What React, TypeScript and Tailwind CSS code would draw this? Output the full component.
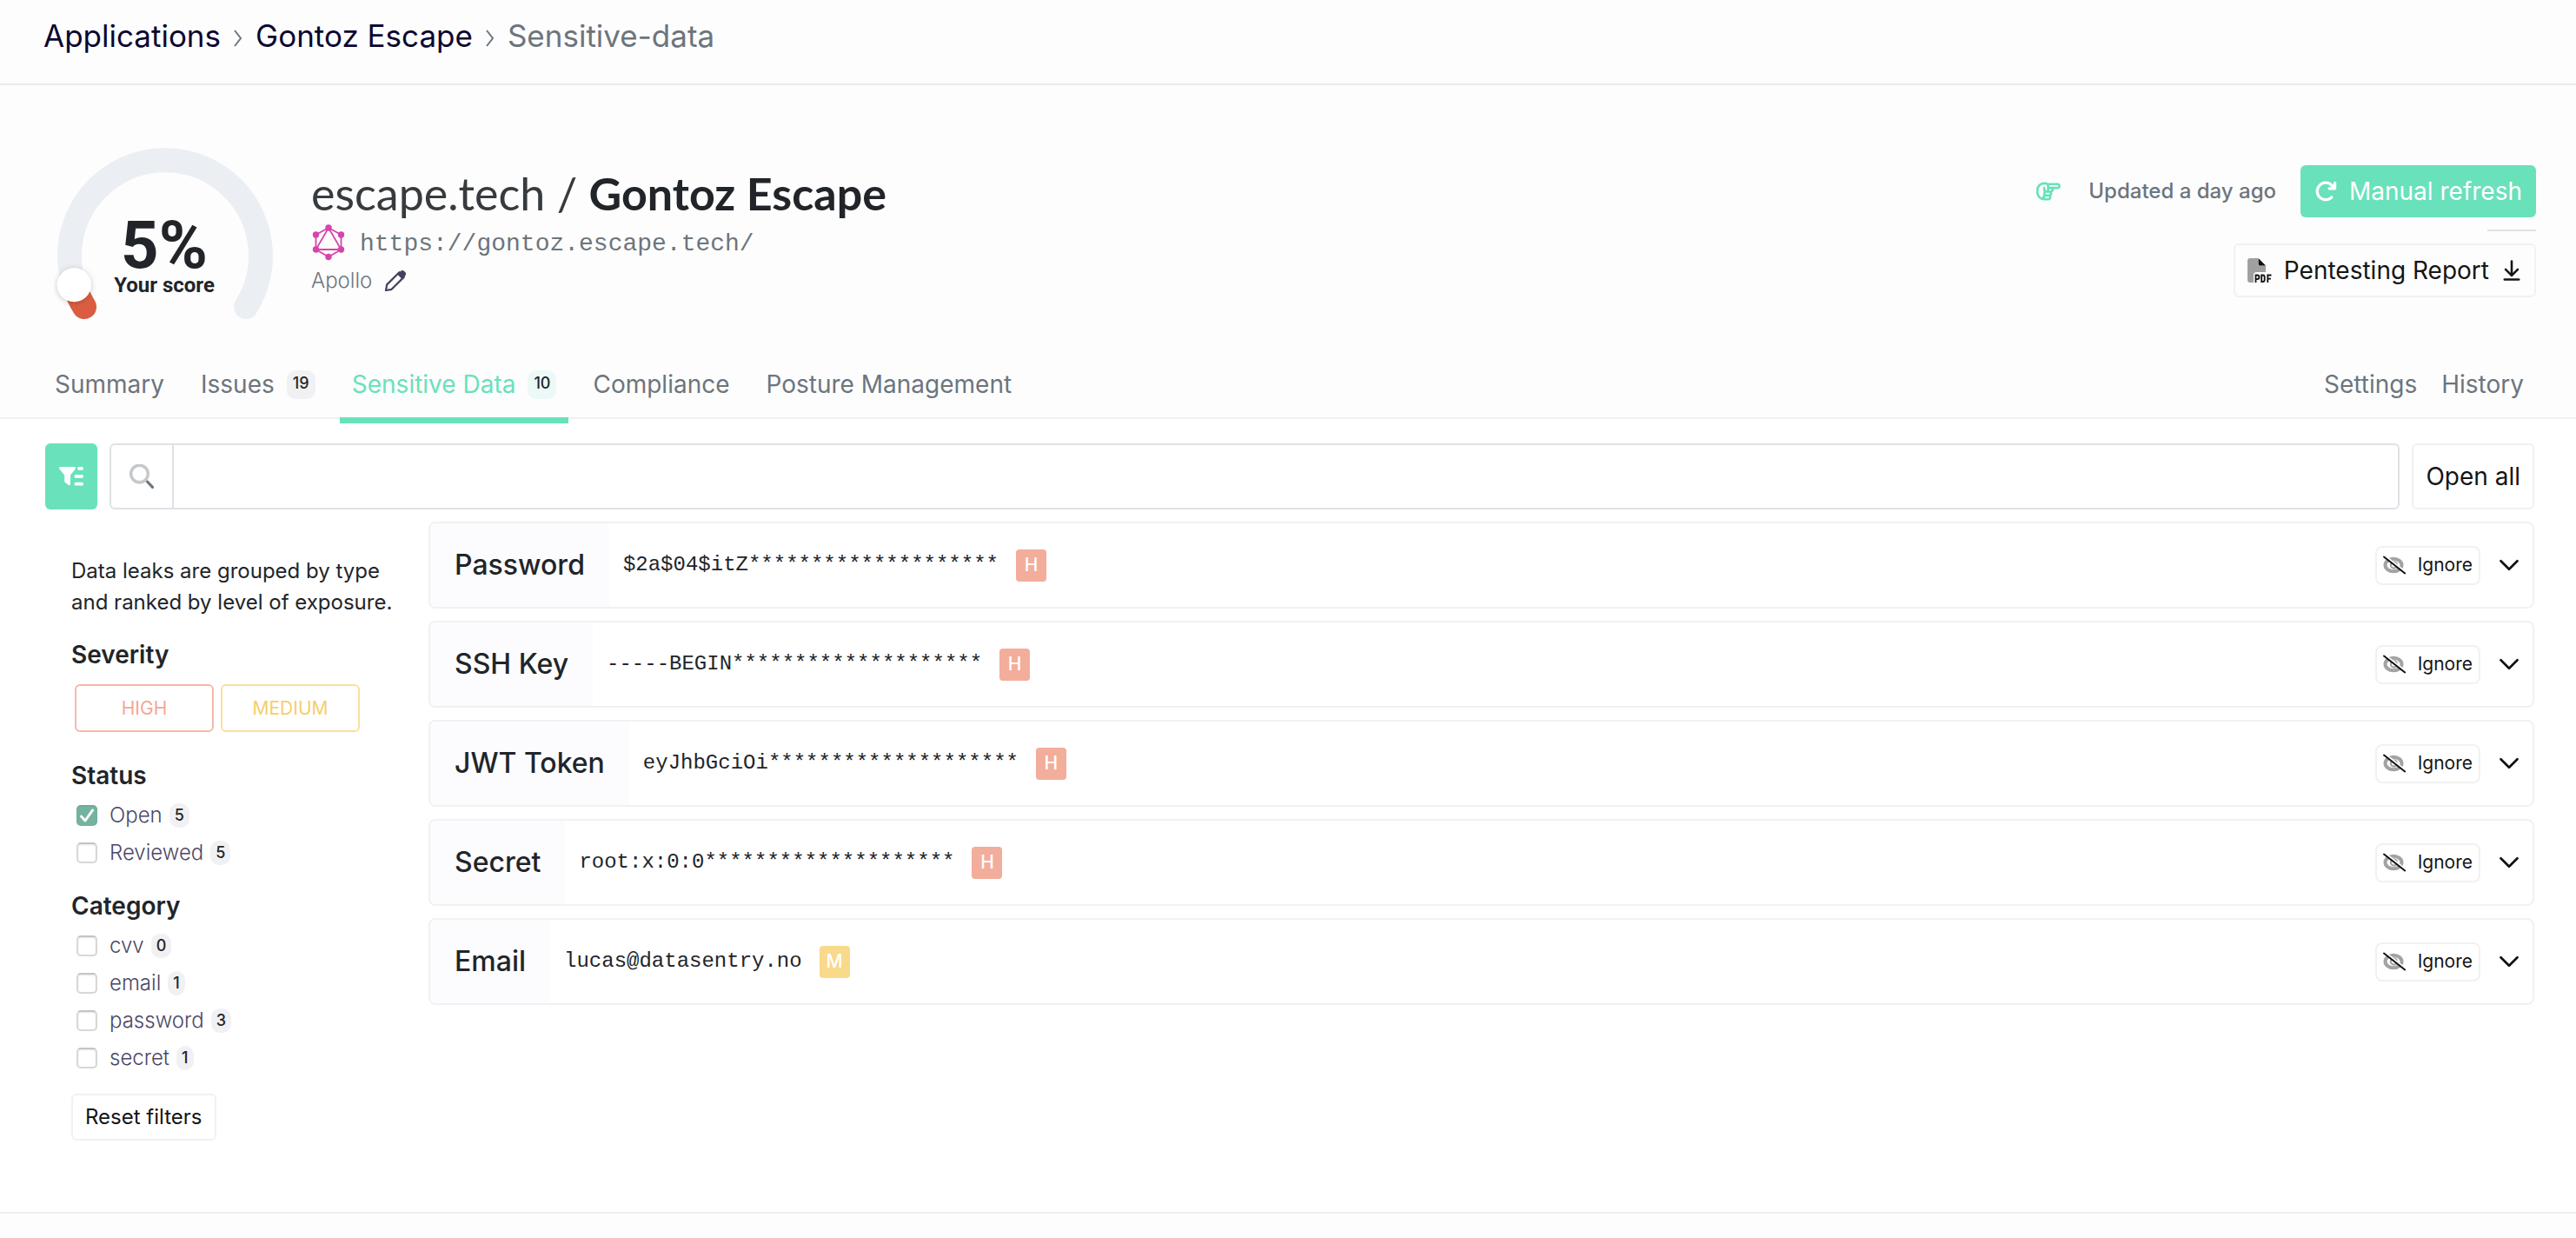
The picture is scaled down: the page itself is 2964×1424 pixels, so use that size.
import React from "react";
import { ArrowDownToLine, ChevronDown } from "lucide-react";
import { FaArrowRotateRight, FaRegHandPointRight } from "react-icons/fa6";

const breadcrumbChevron = (
  <svg viewBox="0 0 12 20" className="mt-1.5 h-5 w-3" fill="none" stroke="#6c757d" strokeWidth="2">
    <path d="M2 1l7 9-7 9" />
  </svg>
);

function ScoreGauge() {
  return (
    <svg
      viewBox="62 166 256 204"
      className="h-[204px] w-64 shrink-0"
      role="img"
      aria-label="Your score: 5%"
    >
      <defs>
        <filter id="knob-shadow" x="-50%" y="-50%" width="200%" height="200%">
          <feDropShadow dx="0" dy="1" stdDeviation="3" floodColor="#000" floodOpacity="0.22" />
        </filter>
      </defs>
      <path
        d="M97 353A110 110 0 1 1 283 353"
        fill="none"
        stroke="#ebeef3"
        strokeWidth="28"
        strokeLinecap="round"
      />
      <path
        d="M97 353A110 110 0 0 1 85.3 327.7"
        fill="none"
        stroke="#da5d41"
        strokeWidth="28"
        strokeLinecap="round"
      />
      <circle cx="85.3" cy="327.7" r="19.5" fill="#fff" filter="url(#knob-shadow)" />
      <text
        x="189"
        y="308"
        textAnchor="middle"
        className="fill-[#212529] font-['Roboto',sans-serif] text-[76px] font-bold"
      >
        5%
      </text>
      <text
        x="189"
        y="336"
        textAnchor="middle"
        className="fill-[#212529] font-['Roboto',sans-serif] text-[24px] font-bold"
      >
        Your score
      </text>
    </svg>
  );
}

function GraphqlLogo() {
  const dots = [
    [20, 4],
    [34.5, 12],
    [34.5, 29],
    [20, 37.5],
    [5.5, 29],
    [5.5, 12],
  ];
  return (
    <svg viewBox="0 0 40 42" className="h-[42px] w-10 shrink-0" aria-hidden="true">
      <g fill="none" stroke="#d644ab" strokeWidth="1.8">
        <path d="M20 4l14.5 8v17L20 37.5 5.5 29V12z" />
        <path d="M20 4l14.5 25h-29z" />
      </g>
      {dots.map(([x, y]) => (
        <circle key={`${x}-${y}`} cx={x} cy={y} r="3.7" fill="#d644ab" />
      ))}
    </svg>
  );
}

function PencilIcon() {
  return (
    <svg viewBox="0 0 26 26" className="size-[26px]" aria-hidden="true">
      <path
        d="M2 24l1.2-6.6L17.4 3.2l5.4 5.4L8.6 22.8z"
        fill="none"
        stroke="#454060"
        strokeWidth="2.2"
        strokeLinejoin="round"
      />
      <path
        d="M15.2 5.6l3.6-3.6c1.4-1.4 3.2-1.2 4.4 0l1 1c1.2 1.2 1.3 3 0 4.3l-3.7 3.7z"
        fill="#454060"
      />
    </svg>
  );
}

function PdfIcon() {
  return (
    <svg viewBox="0 0 28 28" className="size-7" aria-hidden="true">
      <path
        d="M3 0h9v8.5h9V16H10.500A3.500 3.500 0 0 0 7 19.500V28H3a3 3 0 0 1-3-3V3a3 3 0 0 1 3-3z"
        fill="#a0a0a0"
      />
      <path d="M12.500 0L21 8.500h-7a1.500 1.500 0 0 1-1.500-1.500z" fill="#111" />
      <g fill="none" stroke="#111" strokeWidth="1.8">
        <path d="M9.500 28V19.500h1.700a2.300 2.300 0 0 1 0 4.600H9.500" />
        <path d="M16.200 19.500h1.200a2.300 2.300 0 0 1 2.300 2.300v3a2.300 2.300 0 0 1-2.300 2.300h-1.200z" />
        <path d="M27.500 19.500h-4.200V28M23.300 23.600h3.600" />
      </g>
    </svg>
  );
}

function FilterListIcon() {
  return (
    <svg viewBox="0 0 28 22" className="h-[22px] w-7" fill="#fff" aria-hidden="true">
      <path d="M1.500 0h16c1.500 0 2 1.500 1.200 2.500L13 9.500V20c0 1.300-1.200 1.600-2 1l-4-3c-.6-.4-.8-.8-.8-1.500v-7L.4 2.500C-.4 1.500.1 0 1.500 0z" />
      <rect x="21" y="0" width="7" height="3.8" rx="1.9" />
      <rect x="17.500" y="9" width="10.500" height="3.8" rx="1.9" />
      <rect x="17.500" y="17.800" width="10.500" height="3.8" rx="1.9" />
    </svg>
  );
}

function SearchIcon() {
  return (
    <svg viewBox="0 0 28 28" className="size-7" fill="none" aria-hidden="true">
      <path d="M20.500 20l6 6.300" stroke="#6c757d" strokeWidth="3.2" strokeLinecap="round" />
      <circle cx="11.500" cy="11" r="9.8" stroke="#c4c8cb" strokeWidth="3.4" />
    </svg>
  );
}

function EyeSlashIcon() {
  return (
    <svg viewBox="0 0 26 22" className="h-[22px] w-[26px]" fill="none" aria-hidden="true">
      <ellipse cx="12" cy="11" rx="9.500" ry="7.200" stroke="#a3a3a3" strokeWidth="4" />
      <circle cx="12.500" cy="11" r="3.600" stroke="#a3a3a3" strokeWidth="2.200" />
      <path d="M2 .2L26 19" stroke="#fff" strokeWidth="2" />
      <path d="M1 1.500L25.200 20.500" stroke="#111" strokeWidth="2" strokeLinecap="round" />
    </svg>
  );
}

type Tab = { label: string; count?: number; active?: boolean };

const tabs: Tab[] = [
  { label: "Summary" },
  { label: "Issues", count: 19 },
  { label: "Sensitive Data", count: 10, active: true },
  { label: "Compliance" },
  { label: "Posture Management" },
];

function TabLink({ label, count, active }: Tab) {
  return (
    <a
      href="#"
      aria-current={active ? "page" : undefined}
      className={`relative flex h-[76px] items-center gap-3.5 px-3.5 text-[28px] ${
        active ? "text-[#69e1bb]" : "text-[#6c757d]"
      }`}
    >
      {label}
      {count !== undefined && (
        <span
          className={`flex h-[33px] w-[33px] justify-center rounded-[10px] text-[18px] leading-[30px] font-medium text-[#212529] ${
            active ? "bg-[#ebfaf6]" : "bg-[#f1f1f3]"
          }`}
        >
          {count}
        </span>
      )}
      {active && <span className="absolute inset-x-0 -bottom-[7px] h-[7px] bg-[#69e1bb]" />}
    </a>
  );
}

const statuses = [
  { label: "Open", count: 5, checked: true },
  { label: "Reviewed", count: 5, checked: false },
];

const categories = [
  { label: "cvv", count: 0, checked: false },
  { label: "email", count: 1, checked: false },
  { label: "password", count: 3, checked: false },
  { label: "secret", count: 1, checked: false },
];

function CheckRow({ label, count, checked }: { label: string; count: number; checked: boolean }) {
  return (
    <label className="flex h-[43px] items-center pl-1.5 text-[24px] font-light text-[#4b4766]">
      <span className="grid size-6 place-items-center">
        <input
          type="checkbox"
          defaultChecked={checked}
          className="peer col-start-1 row-start-1 size-6 appearance-none rounded-[5px] border-2 border-[#d8d8d8] border-t-[#c4c4c4] bg-white shadow-[inset_0_1px_2px_rgba(0,0,0,0.1)] checked:border-0 checked:bg-[#74b3a0]"
        />
        <svg
          viewBox="0 0 24 24"
          className="pointer-events-none col-start-1 row-start-1 hidden size-6 peer-checked:block"
          fill="none"
          stroke="#fff"
          strokeWidth="3"
          strokeLinecap="round"
          strokeLinejoin="round"
          aria-hidden="true"
        >
          <path d="M5.500 13l4.500 5L18.500 6" />
        </svg>
      </span>
      <span className="ml-3.5">{label}</span>
      <span className="ml-2 rounded-[10px] bg-[#f1f1f3] px-1.5 text-[18px] leading-7 font-medium text-[#212529]">
        {count}
      </span>
    </label>
  );
}

const leaks = [
  { type: "Password", value: "$2a$04$itZ********************", severity: "H" },
  { type: "SSH Key", value: "-----BEGIN********************", severity: "H" },
  { type: "JWT Token", value: "eyJhbGciOi********************", severity: "H" },
  { type: "Secret", value: "root:x:0:0********************", severity: "H" },
  { type: "Email", value: "lucas@datasentry.no", severity: "M" },
];

function LeakRow({ type, value, severity }: { type: string; value: string; severity: string }) {
  return (
    <li className="flex h-[100px] items-center overflow-hidden rounded-lg border-2 border-[#f1f1f2] bg-white pr-2">
      <h3 className="flex h-full items-center bg-[#fcfcfe] px-7 text-[32px] font-medium text-[#212529]">
        {type}
      </h3>
      <code className="ml-4 font-['Liberation_Mono',monospace] text-[24px] text-[#212529]">
        {value}
      </code>
      <span
        className={`ml-5 flex h-[37px] w-[35px] items-center justify-center rounded text-[21px] font-medium text-white ${
          severity === "H" ? "bg-[#f3ad9b]" : "bg-[#f9d98a]"
        }`}
      >
        {severity}
      </span>
      <button
        type="button"
        className="ml-auto flex h-[45px] items-center gap-3.5 rounded-lg border-2 border-[#f1f1f1] px-[7px] text-[21px] text-[#151515]"
      >
        <EyeSlashIcon />
        Ignore
      </button>
      <button type="button" aria-label={`Expand ${type}`} className="ml-3.5 text-[#111]">
        <ChevronDown size={38} strokeWidth={1.7} />
      </button>
    </li>
  );
}

const sectionTitle = "text-[28px] leading-9 font-semibold text-[#212529]";

export default function App() {
  return (
    <div className="min-h-screen bg-[#fdfdfd] font-['Inter',sans-serif]">
      <header className="border-b-2 border-[#ebebf0] pt-[17px] pr-12 pb-[31px] pl-[50px]">
        <nav
          aria-label="Breadcrumb"
          className="flex items-center gap-3.5 text-[35px] leading-[48px]"
        >
          <a href="#" className="text-[#0b0730]">
            Applications
          </a>
          {breadcrumbChevron}
          <a href="#" className="text-[#0b0730]">
            Gontoz Escape
          </a>
          {breadcrumbChevron}
          <span className="text-[#6c757d]">Sensitive-data</span>
        </nav>
      </header>

      <section className="border-b-2 border-[#f0f0f1] pt-[68px]">
        <div className="flex items-start pr-[46px] pl-[62px]">
          <ScoreGauge />
          <div className="ml-10 pt-[26px]">
            <h1 className="font-['Lato',sans-serif] text-[52px] leading-[60px] text-[#212529]">
              <span className="font-normal text-[#373b3e]">escape.tech / </span>
              <span className="font-bold">Gontoz Escape</span>
            </h1>
            <a href="#" className="flex h-[54px] items-center gap-4 text-[#6c757d]">
              <GraphqlLogo />
              <span className="pt-1 font-['Liberation_Mono',monospace] text-[28px]">
                https://gontoz.escape.tech/
              </span>
            </a>
            <div className="flex h-[34px] items-center gap-3.5 text-[24px] font-light text-[#6c757d]">
              Apollo
              <button type="button" aria-label="Edit framework">
                <PencilIcon />
              </button>
            </div>
          </div>
          <div className="ml-auto flex flex-col items-end gap-3.5 pt-6">
            <div className="flex items-center">
              <FaRegHandPointRight className="size-7 text-[#69e1bb]" />
              <span className="mr-7 ml-8 text-[24px] font-medium text-[#6c757d]">
                Updated a day ago
              </span>
              <button
                type="button"
                className="flex h-[60px] items-center gap-3.5 rounded-md bg-[#69e1bb] px-4 text-[28px] text-white"
              >
                <FaArrowRotateRight className="size-[26px]" />
                Manual refresh
              </button>
            </div>
            <hr className="w-14 border-t-2 border-[#dee2e6]" />
            <button
              type="button"
              className="flex h-[62px] items-center gap-3.5 rounded-md border-2 border-[#f1f1f1] px-3.5 text-[28px] text-[#151515]"
            >
              <PdfIcon />
              Pentesting Report
              <ArrowDownToLine size={28} strokeWidth={2.2} className="-mx-0.5" />
            </button>
          </div>
        </div>

        <nav aria-label="Sections" className="mt-[34px] flex justify-between pr-[46px] pl-[49px]">
          <div className="flex gap-3.5">
            {tabs.map((tab) => (
              <TabLink key={tab.label} {...tab} />
            ))}
          </div>
          <div className="flex">
            <TabLink label="Settings" />
            <TabLink label="History" />
          </div>
        </nav>
      </section>

      <main className="border-b-2 border-[#f0f0f1] bg-white pt-7 pr-12 pb-[82px] pl-[52px]">
        <div className="flex h-[76px] gap-3.5">
          <button
            type="button"
            aria-label="Toggle filters"
            className="grid w-[60px] place-items-center rounded-md bg-[#69e1bb]"
          >
            <FilterListIcon />
          </button>
          <div className="flex flex-1 rounded-md border-2 border-[#dee2e6]">
            <label
              htmlFor="search"
              aria-label="Search"
              className="grid w-[72px] place-items-center border-r-2 border-[#dee2e6]"
            >
              <SearchIcon />
            </label>
            <input
              id="search"
              type="text"
              className="min-w-0 flex-1 bg-transparent px-4 text-[28px] outline-none"
            />
          </div>
          <button
            type="button"
            className="rounded-md border-2 border-[#f1f1f1] px-3.5 text-[28px] text-[#151515]"
          >
            Open all
          </button>
        </div>

        <div className="mt-3.5 flex items-start">
          <aside className="w-[441px] shrink-0 pt-[39px] pr-8 pl-[30px]">
            <p className="text-[24px] leading-9 text-[#212529]">
              Data leaks are grouped by type and ranked by level of exposure.
            </p>
            <h2 className={`mt-6 ${sectionTitle}`}>Severity</h2>
            <div className="mt-4 flex gap-2 pl-1">
              <button
                type="button"
                className="h-[55px] w-40 rounded-md border-2 border-[#f6b8a9] text-[21px] text-[#f3a795]"
              >
                HIGH
              </button>
              <button
                type="button"
                className="h-[55px] w-40 rounded-md border-2 border-[#fae0a0] text-[21px] text-[#f7cd6a]"
              >
                MEDIUM
              </button>
            </div>
            <h2 className={`mt-8 ${sectionTitle}`}>Status</h2>
            <div className="mt-1.5">
              {statuses.map((item) => (
                <CheckRow key={item.label} {...item} />
              ))}
            </div>
            <h2 className={`mt-[22px] ${sectionTitle}`}>Category</h2>
            <div className="mt-1.5">
              {categories.map((item) => (
                <CheckRow key={item.label} {...item} />
              ))}
            </div>
            <button
              type="button"
              className="mt-5 h-[54px] rounded-md border-2 border-[#f1f1f1] px-3.5 text-[24px] text-[#151515]"
            >
              Reset filters
            </button>
          </aside>

          <ul className="flex min-w-0 flex-1 flex-col gap-3.5">
            {leaks.map((leak) => (
              <LeakRow key={leak.type} {...leak} />
            ))}
          </ul>
        </div>
      </main>
    </div>
  );
}
